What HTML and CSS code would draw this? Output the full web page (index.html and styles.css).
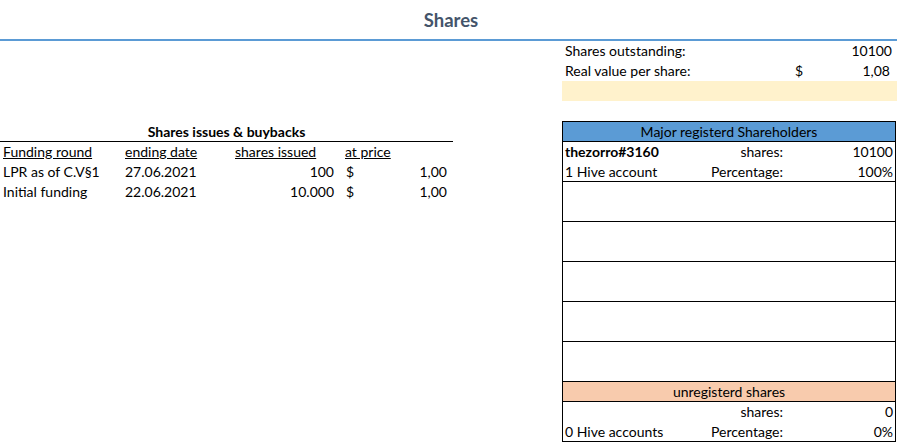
FILE: index.html
```html
<!DOCTYPE html>
<html>
<head>
<meta charset="utf-8">
<link rel="stylesheet" href="styles.css">
</head>
<body>
<div class="sheet">
  <h1 class="title">Shares</h1>
  <div class="rule"></div>
  <div class="content">
    <section class="issues">
      <div class="issues-title">Shares issues &amp; buybacks</div>
      <div class="irow">
        <span class="ca"><u>Funding round</u></span>
        <span class="cb"><u>ending date</u></span>
        <span class="cc head"><u>shares issued</u></span>
        <span class="cd head"><u>at price</u></span>
      </div>
      <div class="irow">
        <span class="ca">LPR as of C.V§1</span>
        <span class="cb">27.06.2021</span>
        <span class="cc">100</span>
        <span class="cd"><span>$</span><span>1,00</span></span>
      </div>
      <div class="irow">
        <span class="ca">Initial funding</span>
        <span class="cb">22.06.2021</span>
        <span class="cc">10.000</span>
        <span class="cd"><span>$</span><span>1,00</span></span>
      </div>
    </section>
    <aside class="side">
      <div class="srow">
        <span class="slabel">Shares outstanding:</span>
        <span class="sval"><span></span><span class="num">10100</span></span>
      </div>
      <div class="srow">
        <span class="slabel">Real value per share:</span>
        <span class="sval"><span>$</span><span class="num acc">1,08</span></span>
      </div>
      <div class="srow fill"></div>
      <div class="srow"></div>
      <div class="holders">
        <div class="hhead blue">Major registerd Shareholders</div>
        <div class="holder">
          <span class="hname"><b>thezorro#3160</b></span><span class="hlabel">shares:</span><span class="hval">10100</span>
          <span class="hname">1 Hive account</span><span class="hlabel">Percentage:</span><span class="hval">100%</span>
        </div>
        <div class="holder"></div>
        <div class="holder"></div>
        <div class="holder"></div>
        <div class="holder"></div>
        <div class="holder"></div>
        <div class="hhead orange">unregisterd shares</div>
        <div class="holder last">
          <span class="hname"></span><span class="hlabel">shares:</span><span class="hval">0</span>
          <span class="hname">0 Hive accounts</span><span class="hlabel">Percentage:</span><span class="hval">0%</span>
        </div>
      </div>
    </aside>
  </div>
</div>
</body>
</html>
```
FILE: styles.css
```css
* { box-sizing: border-box; }
html, body { margin: 0; background: #fff; }
body {
  font-family: Lato, "Open Sans", sans-serif;
  font-size: 14px;
  color: #000;
}
.sheet { width: 902px; height: 446px; overflow: hidden; }
.title {
  margin: 0;
  height: 39px;
  line-height: 40px;
  text-align: center;
  font-size: 18.5px;
  font-weight: bold;
  color: #44546A;
}
.rule { height: 2px; width: 897px; background: #5B9BD5; }
.content { display: flex; }
.issues { width: 453px; padding-top: 80px; }
.issues-title {
  height: 21px;
  line-height: 21px;
  text-align: center;
  font-weight: bold;
  border-bottom: 1px solid #000;
}
.irow {
  display: grid;
  grid-template-columns: 122px 110px 106px 115px;
  height: 20px;
  line-height: 20px;
}
.ca, .cb { padding-left: 3px; white-space: nowrap; }
.cc { text-align: right; padding-right: 4px; }
.cc.head { text-align: left; padding-left: 3px; }
.cd { display: flex; justify-content: space-between; padding: 0 6px 0 8px; }
.cd.head { padding-left: 7px; }
.side { margin-left: 109px; width: 335px; }
.srow {
  display: grid;
  grid-template-columns: 230px 1fr;
  height: 20px;
  line-height: 20px;
}
.slabel { padding-left: 3px; }
.sval { display: flex; justify-content: space-between; padding: 0 5px 0 3px; }
.sval .acc { padding-right: 2px; }
.fill { background: #FFF2CC; }
.holders { width: 334px; border: 1px solid #000; }
.hhead {
  height: 20px;
  line-height: 20px;
  text-align: center;
  border-bottom: 1px solid #000;
}
.blue { background: #5B9BD5; }
.orange { background: #F8CBAD; }
.holder {
  display: grid;
  grid-template-columns: 117px 106px 109px;
  grid-auto-rows: 20px;
  line-height: 20px;
  height: 40px;
  border-bottom: 1px solid #000;
}
.holder.last { border-bottom: none; height: 39px; grid-auto-rows: 19.5px; }
.hname { padding-left: 2px; white-space: nowrap; }
.hlabel { text-align: right; padding-right: 3px; }
.hval { text-align: right; padding-right: 2px; }
```
